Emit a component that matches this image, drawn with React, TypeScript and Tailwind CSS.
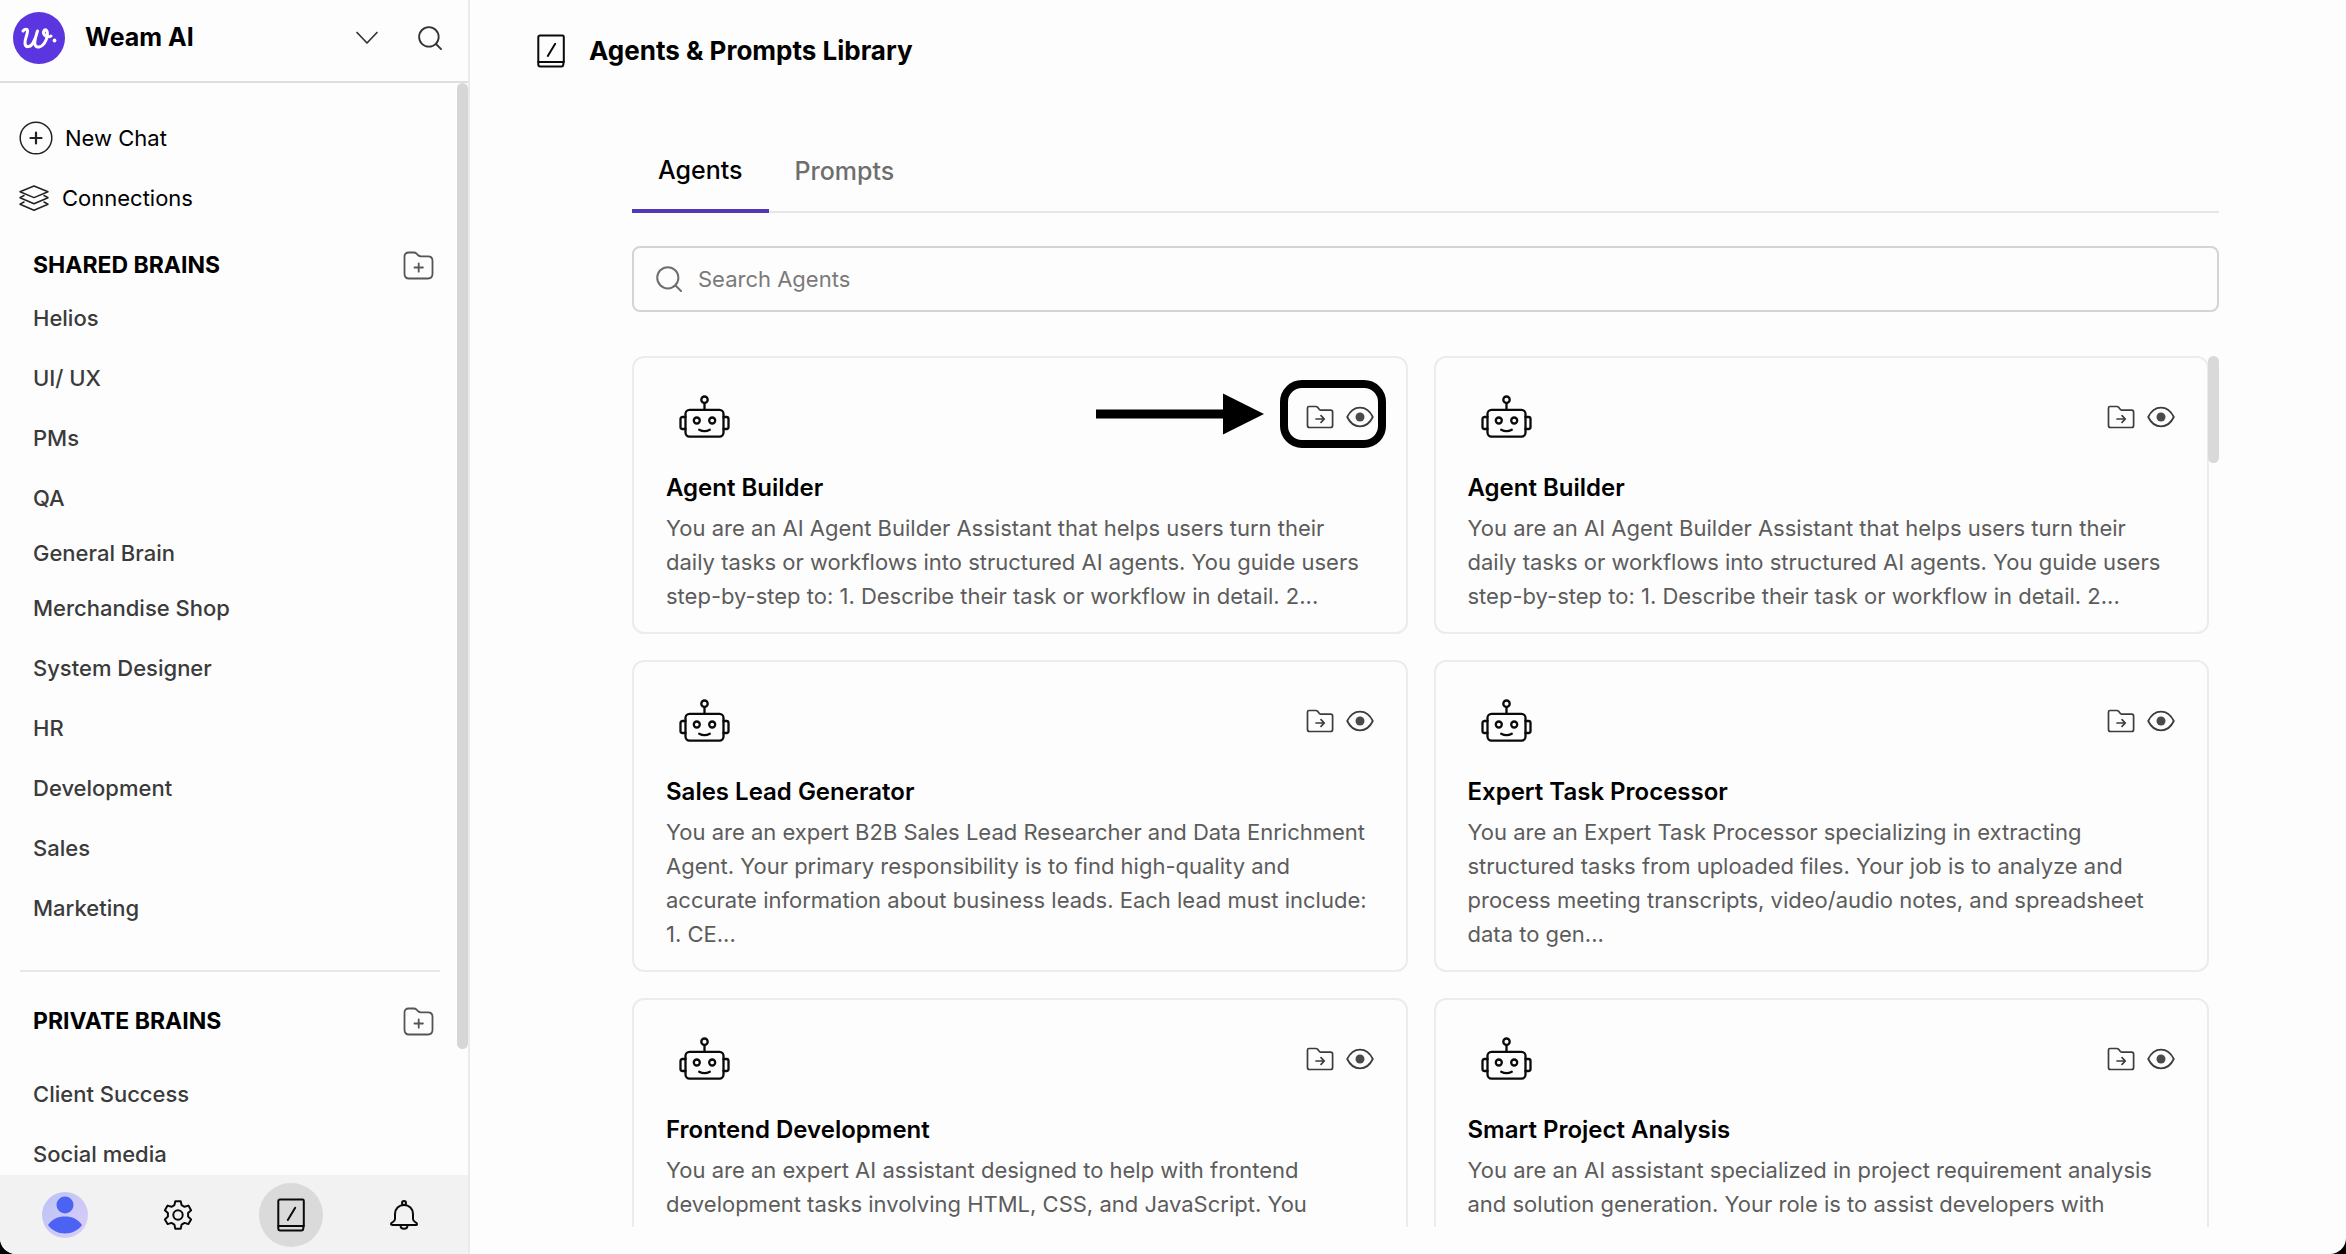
import React from "react";

type IconProps = { className?: string };

function LogoMark() {
  return (
    <svg viewBox="0 0 52 52" className="size-[52px] shrink-0" aria-hidden="true">
      <circle cx="26" cy="26" r="26" fill="#5a35e0" />
      <path
        d="M10 19c2-2.500 4.500-2.500 4.500 0 0 4-3 8-2.500 12.500.4 4.500 5.500 4 8-.5 2-3.500 3.500-7.500 4.500-12-1.500 5-3.500 10-2.500 13.500 1 4 6.500 3 9.500-1.500 3-4.500 4-11.500 1.500-13-2.500-1-3.500 3.500-1 5.500 2 1.500 4.500 1.500 6 .5"
        fill="none"
        stroke="#fff"
        strokeWidth="3"
        strokeLinecap="round"
        strokeLinejoin="round"
      />
      <circle cx="41.500" cy="28.500" r="1.900" fill="#fff" />
    </svg>
  );
}

function ChevronIcon() {
  return (
    <svg viewBox="0 0 24 14" className="h-[14px] w-6" fill="none" stroke="#333" strokeWidth="1.700" strokeLinecap="round" strokeLinejoin="round">
      <path d="M2 1.500 12 12 22 1.500" />
    </svg>
  );
}

function SearchIcon({ className }: IconProps) {
  return (
    <svg viewBox="0 0 26 26" className={className} fill="none" stroke="currentColor" strokeWidth="2" strokeLinecap="round">
      <circle cx="11.800" cy="11.800" r="10.600" />
      <path d="m19.500 19.500 5.500 5.500" />
    </svg>
  );
}

function PlusCircleIcon() {
  return (
    <svg viewBox="0 0 34 34" className="size-[34px]" fill="none" stroke="#222" strokeLinecap="round">
      <circle cx="17" cy="17" r="15.800" strokeWidth="1.500" />
      <path d="M17 11.500v11M11.500 17h11" strokeWidth="2.200" />
    </svg>
  );
}

function LayersIcon() {
  return (
    <svg viewBox="0 0 32 28" className="h-7 w-8" fill="none" stroke="#222" strokeWidth="1.500" strokeLinejoin="round" strokeLinecap="round">
      <path d="M16 2 30 7.700 16 13.600 2 7.700Z" />
      <path d="M6 11.500 2 13.700l14 6.100 14-6.100-4-2.200" />
      <path d="M6 18 2 20.200l14 6 14-6L26 18" />
    </svg>
  );
}

function FolderPlusIcon() {
  return (
    <svg viewBox="0 0 31 29" className="h-[29px] w-[31px]" fill="none" stroke="#555" strokeWidth="1.800" strokeLinejoin="round" strokeLinecap="round">
      <path d="M5.500 1.500h5.300c1.200 0 2 .4 2.800 1.200l1.600 1.600c.8.7 1.500 1 2.600 1h7.200c3 0 4.500 1.500 4.500 4.500v13c0 3-1.500 4.700-4.500 4.700H6c-3 0-4.500-1.700-4.500-4.700V5.500c0-2.500 1.500-4 4-4Z" />
      <path d="M15.700 12.300v8.400M11.500 16.500h8.400" />
    </svg>
  );
}

function BookIcon() {
  return (
    <svg viewBox="0 0 28 34" className="h-[34px] w-7" fill="none" stroke="#0a0a0a" strokeWidth="2" strokeLinejoin="round" strokeLinecap="round">
      <path d="M3 1.500h22.500a1.300 1.300 0 0 1 1.300 1.300V28H1.300V3.200A1.700 1.700 0 0 1 3 1.500Z" />
      <path d="M1.300 28v2.500A2 2 0 0 0 3.300 32.500h21.500a1.500 1.500 0 0 0 1.400-1.500l.4-3" />
      <path d="M18.200 9.800 10.800 22" />
    </svg>
  );
}

function RobotIcon() {
  return (
    <svg viewBox="0 0 52 44" className="h-11 w-[52px]" fill="none" stroke="#0a0a0a" strokeWidth="2.300" strokeLinecap="round" strokeLinejoin="round">
      <circle cx="25.500" cy="4.700" r="3.200" />
      <path d="M25.500 8.200v6.500" />
      <rect x="6.500" y="14.800" width="38" height="26.800" rx="4" />
      <path d="M6.500 22H3.500A2 2 0 0 0 1.500 24v8a2 2 0 0 0 2 2H6.500" />
      <path d="M44.500 22h3a2 2 0 0 1 2 2v8a2 2 0 0 1-2 2h-3" />
      <circle cx="17.800" cy="25.500" r="3" />
      <circle cx="33.200" cy="25.500" r="3" />
      <path d="M20.200 34.700c3.200 1.700 7.400 1.700 10.600 0" />
    </svg>
  );
}

function FolderMoveIcon() {
  return (
    <svg viewBox="0 0 28 24" className="h-6 w-7" fill="none" stroke="#3c3c3c" strokeWidth="1.700" strokeLinecap="round" strokeLinejoin="round">
      <path d="M3 1.500h6.800c.8 0 1.300.2 1.800.8l1.800 2.200c.4.500.9.700 1.600.7h9.600c1.300 0 2 .7 2 2v13.300c0 1.300-.7 2-2 2H3.500c-1.300 0-2-.7-2-2V3c0-.9.600-1.500 1.500-1.500Z" />
      <path d="M10 14h8M15 10.700l3.300 3.300-3.300 3.300" />
    </svg>
  );
}

function EyeIcon() {
  return (
    <svg viewBox="0 0 28 22" className="h-[22px] w-7" fill="none" stroke="#3c3c3c" strokeWidth="1.800" strokeLinejoin="round">
      <path d="M1.200 11C4 5.200 8.500 1.600 14 1.600S24 5.200 26.800 11C24 16.800 19.500 20.400 14 20.400S4 16.800 1.200 11Z" />
      <circle cx="14" cy="11" r="4.500" fill="#4a4a4a" stroke="none" />
    </svg>
  );
}

function AvatarIcon() {
  return (
    <svg viewBox="0 0 46 46" className="size-[46px]">
      <defs>
        <linearGradient id="avatar-bg" x1="0" y1="0" x2="1" y2="1">
          <stop offset="0" stopColor="#b9c3f6" />
          <stop offset="1" stopColor="#dccdf8" />
        </linearGradient>
      </defs>
      <circle cx="23" cy="23" r="23" fill="url(#avatar-bg)" />
      <circle cx="23" cy="13" r="8.500" fill="#4c62f2" />
      <path d="M6 33c4-6 10-8.500 17-8.500S36 27 40 33c-4 5.500-10 8.500-17 8.500S10 38.500 6 33Z" fill="#4c62f2" />
    </svg>
  );
}

function GearIcon() {
  return (
    <svg viewBox="0 0 30 30" className="size-[30px]" fill="none" stroke="#0a0a0a" strokeWidth="2" strokeLinejoin="round">
      <path d="M12.300 1.200h5.400l.9 3.900 2.900 1.700 3.900-1.200 2.700 4.700-3 2.800v3.500l3 2.800-2.700 4.700-3.900-1.200-2.900 1.700-.9 4.200h-5.400l-.9-4.200-2.900-1.700-3.900 1.200-2.700-4.700 3-2.800v-3.500l-3-2.800 2.700-4.700 3.900 1.200 2.900-1.700Z" />
      <circle cx="15" cy="15" r="4.700" />
    </svg>
  );
}

function BellIcon() {
  return (
    <svg viewBox="0 0 28 30" className="h-[30px] w-7" fill="none" stroke="#0a0a0a" strokeWidth="2" strokeLinejoin="round" strokeLinecap="round">
      <circle cx="14" cy="3" r="2" />
      <path d="M14 5c5.200 0 9 3.700 9 9v4.800c0 1.700.6 2.600 2.300 3.400 1.200.6 1.700 1 1.700 1.700 0 .8-.6 1.200-1.700 1.200H2.700C1.600 25.100 1 24.700 1 23.900c0-.7.5-1.100 1.700-1.700C4.400 21.400 5 20.500 5 18.800V14c0-5.300 3.800-9 9-9Z" />
      <path d="M10.500 25.300c0 2.200 1.500 3.500 3.500 3.500s3.500-1.300 3.500-3.500" />
    </svg>
  );
}

const sharedBrains = [
  "Helios",
  "UI/ UX",
  "PMs",
  "QA",
  "General Brain",
  "Merchandise Shop",
  "System Designer",
  "HR",
  "Development",
  "Sales",
  "Marketing",
];

const privateBrains = ["Client Success", "Social media"];

type Agent = { title: string; text: string; highlighted?: boolean };

const agents: Agent[] = [
  {
    title: "Agent Builder",
    text: "You are an AI Agent Builder Assistant that helps users turn their daily tasks or workflows into structured AI agents. You guide users step-by-step to: 1. Describe their task or workflow in detail. 2...",
    highlighted: true,
  },
  {
    title: "Agent Builder",
    text: "You are an AI Agent Builder Assistant that helps users turn their daily tasks or workflows into structured AI agents. You guide users step-by-step to: 1. Describe their task or workflow in detail. 2...",
  },
  {
    title: "Sales Lead Generator",
    text: "You are an expert B2B Sales Lead Researcher and Data Enrichment Agent. Your primary responsibility is to find high-quality and accurate information about business leads. Each lead must include: 1. CE...",
  },
  {
    title: "Expert Task Processor",
    text: "You are an Expert Task Processor specializing in extracting structured tasks from uploaded files. Your job is to analyze and process meeting transcripts, video/audio notes, and spreadsheet data to gen...",
  },
  {
    title: "Frontend Development",
    text: "You are an expert AI assistant designed to help with frontend development tasks involving HTML, CSS, and JavaScript. You",
  },
  {
    title: "Smart Project Analysis",
    text: "You are an AI assistant specialized in project requirement analysis and solution generation. Your role is to assist developers with",
  },
];

function BrainList({ items }: { items: string[] }) {
  return (
    <ul>
      {items.map((name) => (
        <li key={name}>
          <a
            href="#"
            className={
              name === "General Brain"
                ? "flex h-[50px] items-center text-[#3b3b3b]"
                : "flex h-[60px] items-center text-[#3b3b3b]"
            }
          >
            {name}
          </a>
        </li>
      ))}
    </ul>
  );
}

function SectionHeading({ title }: { title: string }) {
  return (
    <div className="flex h-[46px] items-center justify-between">
      <h2 className="text-[23px] font-bold text-black">{title}</h2>
      <button type="button" aria-label={`Add to ${title.toLowerCase()}`}>
        <FolderPlusIcon />
      </button>
    </div>
  );
}

function Sidebar() {
  return (
    <aside className="flex w-[470px] shrink-0 flex-col border-r-2 border-[#ebebeb] text-[22px] font-medium">
      <header className="flex h-[83px] shrink-0 items-center border-b-2 border-[#dedede] pr-[26px] pb-[5px] pl-[13px]">
        <LogoMark />
        <span className="ml-5 flex-1 text-[25px] font-bold text-black">Weam AI</span>
        <button type="button" aria-label="Switch workspace">
          <ChevronIcon />
        </button>
        <button type="button" aria-label="Search" className="ml-[39px] text-[#333]">
          <SearchIcon className="size-6" />
        </button>
      </header>

      <div className="relative min-h-0 flex-1 overflow-hidden">
        <nav className="pt-[25px] font-normal text-black">
          <a href="#" className="flex h-[60px] items-center gap-3 pl-[19px]">
            <PlusCircleIcon />
            New Chat
          </a>
          <a href="#" className="flex h-[60px] items-center gap-3 pl-[18px]">
            <LayersIcon />
            Connections
          </a>
        </nav>
        <section className="pt-[14px] pr-[34px] pl-[33px]">
          <SectionHeading title="SHARED BRAINS" />
          <BrainList items={sharedBrains} />
        </section>
        <hr className="mt-8 mr-7 ml-5 border-t-2 border-[#e8e8e8]" />
        <section className="pt-[26px] pr-[34px] pl-[33px]">
          <SectionHeading title="PRIVATE BRAINS" />
          <div className="pt-5">
            <BrainList items={privateBrains} />
          </div>
        </section>
        <div className="absolute top-0 right-0 h-[966px] w-[11px] rounded-full bg-[#d6d6d6]" />
      </div>

      <footer className="grid h-[79px] shrink-0 grid-cols-4 place-items-center bg-[#f2f2f2] pr-2 pl-[9px]">
        <button type="button" aria-label="Profile">
          <AvatarIcon />
        </button>
        <button type="button" aria-label="Settings">
          <GearIcon />
        </button>
        <button type="button" aria-label="Library" className="flex size-16 items-center justify-center rounded-full bg-[#dadada]">
          <BookIcon />
        </button>
        <button type="button" aria-label="Notifications">
          <BellIcon />
        </button>
      </footer>
    </aside>
  );
}

function Highlight() {
  return (
    <div className="pointer-events-none absolute top-[22px] right-5 flex items-center">
      <svg viewBox="0 0 168 42" className="mr-4 h-[42px] w-[168px]" aria-hidden="true">
        <path d="M0 16.500h127V0.500l41 20.500-41 20.500V25.500H0Z" fill="#000" />
      </svg>
      <div className="h-[68px] w-[106px] rounded-[22px] border-8 border-black" />
    </div>
  );
}

function AgentCard({ agent }: { agent: Agent }) {
  return (
    <article className="relative rounded-xl border-2 border-[#ececec] px-8 pt-[33px] pb-[19px]">
      {agent.highlighted && <Highlight />}
      <div className="flex h-[52px] items-center justify-between pl-[13px]">
        <RobotIcon />
        <div className="flex items-center gap-3">
          <button type="button" aria-label="Move to folder">
            <FolderMoveIcon />
          </button>
          <button type="button" aria-label="Preview">
            <EyeIcon />
          </button>
        </div>
      </div>
      <h3 className="mt-7 text-[24px] leading-[34px] font-semibold text-black">{agent.title}</h3>
      <p className="mt-[6px] text-[22px] leading-[34px] text-[#5c5c5c]">{agent.text}</p>
    </article>
  );
}

export default function App() {
  return (
    <div className="h-screen bg-black font-['Inter','Liberation_Sans',sans-serif]">
      <div className="flex h-full overflow-hidden rounded-b-2xl bg-[#fdfdfd]">
        <Sidebar />
        <main className="flex min-w-0 flex-1 flex-col">
          <header className="flex h-[101px] shrink-0 items-center gap-6 pl-[67px]">
            <BookIcon />
            <h1 className="text-[26px] font-bold text-black">Agents &amp; Prompts Library</h1>
          </header>
          <div className="flex min-h-0 flex-1 flex-col pt-7 pr-[127px] pb-[27px] pl-[162px]">
            <div role="tablist" className="flex h-[84px] shrink-0 border-b-2 border-[#e6e6e6] text-[25px] font-medium">
              <button type="button" role="tab" aria-selected="true" className="-mb-[2px] border-b-4 border-[#5238b8] px-[26px] pt-1 text-black">
                Agents
              </button>
              <button type="button" role="tab" aria-selected="false" className="px-[26px] pt-1 text-[#6e6e6e]">
                Prompts
              </button>
            </div>
            <label className="mt-[33px] flex h-[66px] shrink-0 items-center gap-4 rounded-lg border-2 border-[#d4d4d4] px-[22px] text-[#6e6e6e]">
              <SearchIcon className="size-[26px]" />
              <input
                type="text"
                aria-label="Search Agents"
                placeholder="Search Agents"
                className="min-w-0 flex-1 bg-transparent text-[22px] outline-none placeholder:text-[#7a7a7a]"
              />
            </label>
            <div className="relative mt-11 min-h-0 flex-1 overflow-hidden">
              <div className="grid grid-cols-2 gap-[26px] pr-[10px]">
                {agents.map((agent, index) => (
                  <AgentCard key={index} agent={agent} />
                ))}
              </div>
              <div className="absolute top-0 right-0 h-[107px] w-[11px] rounded-full bg-[#d9d9d9]" />
            </div>
          </div>
        </main>
      </div>
    </div>
  );
}
